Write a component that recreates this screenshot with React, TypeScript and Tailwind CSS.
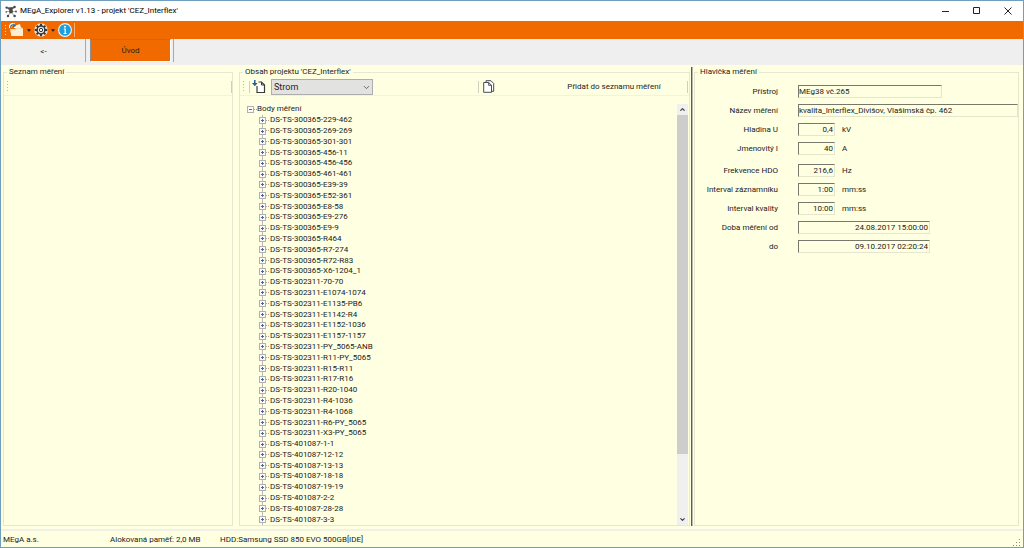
import React from "react";
import { ChevronDown, ChevronUp } from "lucide-react";

const points = [
	"DS-TS-300365-229-462",
	"DS-TS-300365-269-269",
	"DS-TS-300365-301-301",
	"DS-TS-300365-456-11",
	"DS-TS-300365-456-456",
	"DS-TS-300365-461-461",
	"DS-TS-300365-E39-39",
	"DS-TS-300365-E52-361",
	"DS-TS-300365-E8-58",
	"DS-TS-300365-E9-276",
	"DS-TS-300365-E9-9",
	"DS-TS-300365-R464",
	"DS-TS-300365-R7-274",
	"DS-TS-300365-R72-R83",
	"DS-TS-300365-X6-1204_1",
	"DS-TS-302311-70-70",
	"DS-TS-302311-E1074-1074",
	"DS-TS-302311-E1135-PB6",
	"DS-TS-302311-E1142-R4",
	"DS-TS-302311-E1152-1036",
	"DS-TS-302311-E1157-1157",
	"DS-TS-302311-PY_5065-ANB",
	"DS-TS-302311-R11-PY_5065",
	"DS-TS-302311-R15-R11",
	"DS-TS-302311-R17-R16",
	"DS-TS-302311-R20-1040",
	"DS-TS-302311-R4-1036",
	"DS-TS-302311-R4-1068",
	"DS-TS-302311-R6-PY_5065",
	"DS-TS-302311-X3-PY_5065",
	"DS-TS-401087-1-1",
	"DS-TS-401087-12-12",
	"DS-TS-401087-13-13",
	"DS-TS-401087-18-18",
	"DS-TS-401087-19-19",
	"DS-TS-401087-2-2",
	"DS-TS-401087-28-28",
	"DS-TS-401087-3-3",
];

const deviceFields = [
	{ id: "device", label: "Přístroj", value: "MEg38 vč.265", width: "w-36" },
	{
		id: "name",
		label: "Název měření",
		value: "kvalita_Interflex_Divišov, Vlašimská čp. 462",
		width: "flex-1",
	},
	{ id: "voltage", label: "Hladina U", value: "0,4", unit: "kV", width: "w-[37px] text-right" },
	{ id: "current", label: "Jmenovitý I", value: "40", unit: "A", width: "w-[37px] text-right" },
];

const recordFields = [
	{ id: "hdo", label: "Frekvence HDO", value: "216,6", unit: "Hz", width: "w-[37px] text-right" },
	{ id: "recorder", label: "Interval záznamníku", value: "1:00", unit: "mm:ss", width: "w-[37px] text-right" },
	{ id: "quality", label: "Interval kvality", value: "10:00", unit: "mm:ss", width: "w-[37px] text-right" },
	{ id: "from", label: "Doba měření od", value: "24.08.2017 15:00:00", width: "w-[132px] text-right" },
	{ id: "to", label: "do", value: "09.10.2017 02:20:24", width: "w-[132px] text-right" },
];

type FieldProps = {
	id: string;
	label: string;
	value: string;
	unit?: string;
	width: string;
};

const Field: React.FC<FieldProps> = ({ id, label, value, unit, width }) => (
	<div className="flex h-[13px] items-center">
		<label htmlFor={id} className="mr-5 w-[83px] shrink-0 text-right">
			{label}
		</label>
		<input
			id={id}
			readOnly
			value={value}
			className={`h-[13px] min-w-0 border border-t-[#77776c] border-r-[#e6e6cc] border-b-[#e6e6cc] border-l-[#77776c] bg-[#ffffe1] pr-px outline-none ${width}`}
		/>
		{unit && <span className="ml-[7px]">{unit}</span>}
	</div>
);

const Grip = ({ className = "text-[#b9b9ae]" }: { className?: string }) => (
	<svg width="2" height="11" viewBox="0 0 2 11" className={`shrink-0 ${className}`} fill="currentColor">
		<path d="M0 0h1v1H0zM0 3h1v1H0zM0 6h1v1H0zM0 9h1v1H0z" />
	</svg>
);

const Caret = () => (
	<svg width="4" height="3" viewBox="0 0 5 3" className="shrink-0">
		<path d="M0 0h5L2.500 3z" fill="#1c1c1c" />
	</svg>
);

const AppIcon = () => (
	<svg width="12" height="13" viewBox="0 0 12 13" fill="#4a4a4a">
		<path
			d="M1.500 2.500 6 6.500 9.500 2M6 6.500H11M6 6.500 9.500 11M6 6.500 3 11M6 6.500H1"
			stroke="#8a8a8a"
			strokeWidth=".7"
		/>
		<circle cx="6" cy="6.500" r="2" />
		<circle cx="1.600" cy="2.600" r="1.200" />
		<circle cx="9.500" cy="2" r="1.300" />
		<circle cx="11" cy="6.500" r=".9" />
		<circle cx="9.600" cy="11" r="1.300" />
		<circle cx="3" cy="11" r="1.200" />
		<circle cx="1.200" cy="7" r=".8" />
	</svg>
);

const OpenIcon = () => (
	<svg width="15" height="14" viewBox="0 0 15 14">
		<path d="M5 3 11 1l1 4H5z" fill="#fffdf5" />
		<path d="M1 6h5l1-1.500h6l1 1V13H2.500z" fill="#f6dfb2" />
		<path d="M2.500 13 1.500 7.500h5L8 6h6v7z" fill="#fbeed5" />
		<path d="M1.500 5C1 2 3 .8 5.500 1.800" stroke="#fff" strokeWidth="3" fill="none" />
		<path d="M1.800 5C1.500 2.500 3 1.300 5 2.200" stroke="#2b6a93" strokeWidth="1.300" fill="none" />
		<path d="M4.500.3 7.300 3 4 4.300z" fill="#2b6a93" />
	</svg>
);

const GearIcon = () => (
	<svg width="14" height="14" viewBox="0 0 14 14">
		<circle cx="7" cy="7" r="6.800" fill="#f4dcc4" />
		<g stroke="#2f3942" strokeWidth="2">
			<path d="M7 .7v12.600M.7 7h12.600M2.600 2.600l8.800 8.800M11.400 2.600l-8.800 8.800" />
		</g>
		<circle cx="7" cy="7" r="3.900" fill="#f2e9df" stroke="#2f3942" strokeWidth="1.500" />
		<circle cx="7" cy="7" r="1.700" fill="#f2e9df" stroke="#2f3942" />
	</svg>
);

const InfoIcon = () => (
	<svg width="14" height="14" viewBox="0 0 14 14">
		<circle cx="7" cy="7" r="6.400" fill="#1c9fe0" stroke="#f3f6f6" strokeWidth="1.100" />
		<circle cx="7" cy="3.700" r="1" fill="#fff" />
		<path d="M5.800 6h1.400v4.500M5.600 10.500h3" stroke="#fff" strokeWidth="1.200" fill="none" />
	</svg>
);

const ImportIcon = () => (
	<svg width="14" height="14" viewBox="0 0 14 14" fill="none">
		<path d="M5 6v6.500h7.500V5L9.500 2H6.500" fill="#fff" stroke="#3b3b3b" strokeWidth="1.200" />
		<path d="M9.500 2v3h3" stroke="#3b3b3b" />
		<path d="M2.800 0v4" stroke="#1f5f96" strokeWidth="1.500" />
		<path d="M0 3h5.600L2.800 6.200z" fill="#1f5f96" />
	</svg>
);

const CopyIcon = () => (
	<svg width="12" height="13" viewBox="0 0 12 13" fill="#fff" stroke="#4a4a54">
		<path d="M3 2.500V.7h5L10.700 3.500v7.800H8.500" />
		<path d="M.7 2.500h5L8.500 5.300v7H.7z" />
		<path d="M5.700 2.500v2.800h2.800" fill="none" />
	</svg>
);

const Expander = ({ open = false }: { open?: boolean }) => (
	<button aria-label={open ? "Sbalit" : "Rozbalit"} className="block shrink-0">
		<svg width="7" height="7" viewBox="0 0 7 7" fill="none" shapeRendering="crispEdges">
			<path d="M.5.5h6v6h-6z" fill="#fbfbf3" stroke="#b0b0b4" />
			<path d={open ? "M2 3.500h3" : "M2 3.500h3M3.500 2v3"} stroke="#5a6398" />
		</svg>
	</button>
);

const Group = ({ title, className, children }: { title: string; className: string; children?: React.ReactNode }) => (
	<fieldset className={`flex min-w-0 flex-col border border-[#e7e7cf] ${className}`}>
		<legend className="ml-[3px] px-0.5 leading-[10px]">{title}</legend>
		{children}
	</fieldset>
);

const TitleBar = () => (
	<header className="flex h-5 shrink-0 items-center bg-white pl-1 text-black">
		<AppIcon />
		<h1 className="ml-[3px] flex-1">MEgA_Explorer v1.13 - projekt 'CEZ_Interflex'</h1>
		<div className="flex h-full">
			<button aria-label="Minimalizovat" className="grid w-[31px] place-items-center">
				<svg width="8" height="8" viewBox="0 0 8 8" stroke="#222"><path d="M0 4.500h7" /></svg>
			</button>
			<button aria-label="Maximalizovat" className="grid w-[31px] place-items-center">
				<svg width="8" height="8" viewBox="0 0 8 8" stroke="#222" fill="none"><path d="M.5.500h6v6h-6z" /></svg>
			</button>
			<button aria-label="Zavřít" className="grid w-[31px] place-items-center">
				<svg width="8" height="8" viewBox="0 0 8 8" stroke="#222"><path d="M.5.500l7 7M7.500.5l-7 7" /></svg>
			</button>
		</div>
	</header>
);

const MainToolbar = () => (
	<div className="flex h-[18px] shrink-0 items-center bg-[#f06a00] pl-1">
		<Grip className="text-[#ffd9b5]" />
		<button aria-label="Otevřít" className="ml-0.5 flex items-center gap-[3px]">
			<OpenIcon />
			<Caret />
		</button>
		<button aria-label="Nastavení" className="ml-[3px] flex items-center gap-[3px]">
			<GearIcon />
			<Caret />
		</button>
		<button aria-label="Informace" className="ml-[3px]">
			<InfoIcon />
		</button>
		<span className="ml-[2px] h-3.5 w-px bg-[#f8b27c]" />
	</div>
);

const TabBar = () => (
	<nav className="flex h-[26px] shrink-0 bg-[#efefef] pl-px">
		<button className="mb-[3px] w-[84px] border-r border-[#a8a8a8] pt-0.5">&lt;-</button>
		<button className="mb-[3px] ml-1 w-[81px] border border-t-[#9a7457] border-r-[#fff] border-b-[#fff] border-l-[#8d8d8d] bg-[#f06a00] pt-px">
			Úvod
		</button>
		<span className="mb-[3px] ml-0.5 w-px bg-[#a8a8a8]" />
	</nav>
);

const ProjectToolbar = () => (
	<div className="mt-px flex h-[18px] shrink-0 items-center border-b border-[#f3f3dc] pr-px pl-[3px]">
		<Grip />
		<span className="ml-1 h-3 w-px bg-[#cfcfc0]" />
		<button aria-label="Importovat" className="ml-0.5">
			<ImportIcon />
		</button>
		<div className="relative ml-[5px]">
			<select
				aria-label="Zobrazení"
				className="block h-4 w-[102px] appearance-none border border-[#adadad] bg-[#e2e2e1] px-0.5 text-[9px] leading-3"
			>
				<option>Strom</option>
			</select>
			<ChevronDown size={9} className="pointer-events-none absolute top-1 right-0.5" color="#444" />
		</div>
		<span className="ml-[105px] h-3 w-px bg-[#cfcfc0]" />
		<button aria-label="Kopírovat" className="ml-1">
			<CopyIcon />
		</button>
		<button className="ml-[46px] flex-1">Přidat do seznamu měření</button>
		<span className="h-3 w-px bg-[#cfcfc0]" />
	</div>
);

const Tree = () => (
	<ul className="flex flex-1 flex-col pl-[7px]">
		<li className="flex min-h-0 flex-1 items-center">
			<Expander open />
			<span className="w-[3px] border-t border-dotted border-[#a3a3a8]" />
			<span className="leading-[10px]">Body měření</span>
		</li>
		{points.map((point) => (
			<li key={point} className="ml-3 flex min-h-0 flex-1 items-center">
				<span className="flex flex-col items-center self-stretch">
					<span className="w-px flex-1 bg-[#b9b9b4]" />
					<Expander />
					<span className="w-px flex-1 bg-[#b9b9b4]" />
				</span>
				<span className="mr-px w-[3px] border-t border-dotted border-[#a3a3a8]" />
				<span className="leading-[10px]">{point}</span>
			</li>
		))}
	</ul>
);

const ScrollBar = () => (
	<div className="mr-px flex w-[11px] flex-col bg-[#f0f0f0]">
		<button aria-label="Nahoru" className="grid h-[11px] place-items-center">
			<ChevronUp size={7} strokeWidth={4} color="#404040" />
		</button>
		<div className="flex flex-1 flex-col">
			<div className="h-[85%] bg-[#cdcdcd]" />
		</div>
		<button aria-label="Dolů" className="grid h-[11px] place-items-center">
			<ChevronDown size={7} strokeWidth={4} color="#404040" />
		</button>
	</div>
);

const App: React.FC = () => {
	return (
		<div className="flex h-screen flex-col border border-[#6f9fbd] bg-[#ffffe1] font-['Roboto',sans-serif] text-[8px] leading-[10px] text-[#222]">
			<TitleBar />
			<MainToolbar />
			<TabBar />
			<main className="flex min-h-0 flex-1 pt-0.5 pr-1 pb-[3px] pl-0.5">
				<Group title="Seznam měření" className="w-[230px]">
					<div className="mt-px flex h-[18px] items-center justify-between border-b border-[#f3f3dc] pl-[3px]">
						<Grip />
						<span className="h-3 w-px bg-[#cfcfc0]" />
					</div>
				</Group>
				<Group title="Obsah projektu 'CEZ_Interflex'" className="ml-1.5 w-[451px]">
					<ProjectToolbar />
					<div className="mt-2 flex min-h-0 flex-1">
						<Tree />
						<ScrollBar />
					</div>
				</Group>
				<div className="mr-px ml-px w-0.5 border-r border-l border-r-[#b9b9a8] border-l-[#5c5c54]" />
				<Group title="Hlavička měření" className="flex-1">
					<div className="flex flex-col gap-1.5 pt-2">
						{deviceFields.map((field) => (
							<Field key={field.id} {...field} />
						))}
					</div>
					<div className="flex flex-col gap-1.5 pt-[9px]">
						{recordFields.map((field) => (
							<Field key={field.id} {...field} />
						))}
					</div>
				</Group>
			</main>
			<footer className="flex h-[18px] shrink-0 items-center border-t-2 border-[#f0f0e6] pl-0.5">
				<span className="w-[107px] pt-0.5">MEgA a.s.</span>
				<span className="w-[110px] pt-0.5">Alokovaná paměť: 2,0 MB</span>
				<span className="flex-1 pt-0.5">HDD:Samsung SSD 850 EVO 500GB[IDE]</span>
				<svg width="8" height="8" viewBox="0 0 8 8" fill="#8b8b80" className="mr-0.5 self-end">
					<path d="M6 0h1v1H6zM3 3h1v1H3zM6 3h1v1H6zM0 6h1v1H0zM3 6h1v1H3zM6 6h1v1H6z" />
				</svg>
			</footer>
		</div>
	);
};

export default App;
